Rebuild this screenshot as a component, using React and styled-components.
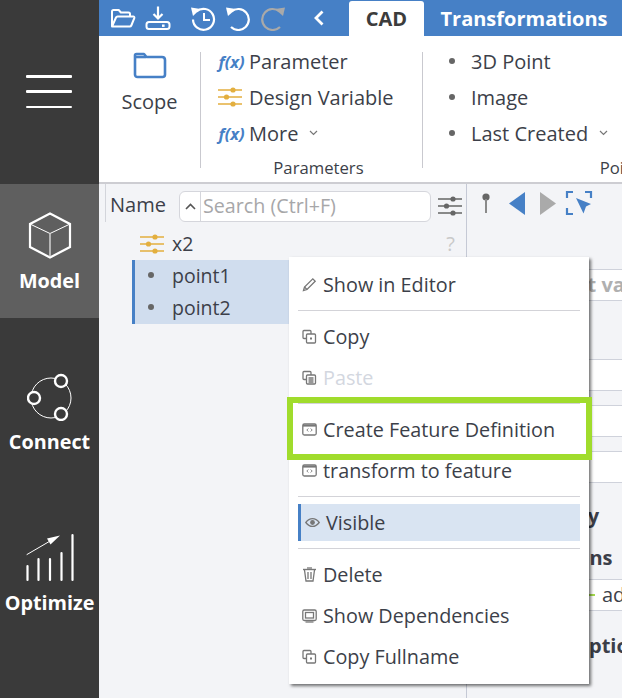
import React from 'react';
import styled, { createGlobalStyle } from 'styled-components';

const GlobalStyle = createGlobalStyle`
  html, body {
    margin: 0;
    padding: 0;
    width: 622px;
    height: 698px;
    overflow: hidden;
    background: #f3f4f7;
    font-family: "Open Sans", "Noto Sans", sans-serif;
    color: #3c3f49;
  }
  * { box-sizing: border-box; }
`;

const Shell = styled.div`
  display: grid;
  grid-template-columns: 99px 523px;
  width: 622px;
  height: 698px;
  overflow: hidden;
`;

/* left rail */
const Rail = styled.nav`
  background: #3a3a3a;
  display: flex;
  flex-direction: column;
  gap: 27px;
`;

const MenuArea = styled.div`
  height: 184px;
  margin-bottom: -27px;
  padding: 75px 0 0 26px;
  display: flex;
  flex-direction: column;
  gap: 12.8px;
`;

const MenuLine = styled.span`
  display: block;
  width: 46px;
  height: 2.5px;
  border-radius: 1px;
  background: #fff;
`;

const RailItem = styled.div`
  height: 134px;
  background: ${(p) => (p.$active ? '#5f5f5f' : 'transparent')};
  display: flex;
  flex-direction: column;
  align-items: center;
  padding-top: ${(p) => p.$top}px;
`;

const RailLabel = styled.span`
  color: #fff;
  font-size: 19.8px;
  font-weight: 700;
  line-height: 26px;
  white-space: nowrap;
  margin-top: ${(p) => p.$gap}px;
`;

/* top bar */
const Main = styled.div`
  display: flex;
  flex-direction: column;
  min-width: 0;
`;

const TopBar = styled.div`
  height: 36px;
  background: #4680c6;
  display: flex;
  align-items: center;
  padding-left: 11px;
  flex: none;
`;

const BarIcon = styled.svg`
  width: 26px;
  height: 26px;
  flex: none;
  margin-right: ${(p) => p.$gap}px;
`;

const BackChevron = styled.svg`
  width: 10px;
  height: 16px;
  flex: none;
  margin-right: 25px;
`;

const Tab = styled.div`
  height: 35px;
  margin-top: 1px;
  width: ${(p) => p.$width}px;
  flex: none;
  border-radius: 3px 3px 0 0;
  background: ${(p) => (p.$active ? '#fff' : 'transparent')};
  color: ${(p) => (p.$active ? '#3c3c3c' : '#fff')};
  font-size: 20px;
  font-weight: 700;
  line-height: 35px;
  text-align: center;
  white-space: nowrap;
`;

/* ribbon */
const Ribbon = styled.div`
  height: 148px;
  flex: none;
  background: #fff;
  border-bottom: 2px solid #cdcdd2;
  display: flex;
  padding-top: 16px;
  overflow: hidden;
`;

const RibbonGroup = styled.div`
  width: ${(p) => p.$width}px;
  flex: none;
  height: 116px;
  border-right: ${(p) => (p.$last ? 'none' : '1px solid #c9c9cf')};
  position: relative;
  display: flex;
  flex-direction: column;
`;

const ScopeButton = styled.div`
  display: flex;
  flex-direction: column;
  align-items: center;
  font-size: 20px;
  line-height: 27px;
  gap: 9px;
`;

const RibbonRows = styled.div`
  display: flex;
  flex-direction: column;
  margin-top: -9px;
  padding-left: ${(p) => p.$left}px;
`;

const RibbonRow = styled.div`
  height: 36px;
  display: flex;
  align-items: center;
  font-size: 20px;
  white-space: nowrap;
`;

const IconSlot = styled.span`
  width: ${(p) => p.$width}px;
  flex: none;
  display: flex;
  align-items: center;
`;

const Fx = styled.span`
  color: #4680c6;
  font-family: "Open Sans", sans-serif;
  font-size: 16.5px;
  font-weight: 700;
  font-style: italic;
  padding-left: 0.5px;
`;

const Caret = styled.span`
  margin-left: ${(p) => p.$gap}px;
  display: inline-flex;
`;

const GroupLabel = styled.div`
  position: absolute;
  left: 14px;
  right: 0;
  top: 104px;
  text-align: center;
  font-size: 16.7px;
  line-height: 24px;
`;

const Dot = styled.span`
  width: 6px;
  height: 6px;
  border-radius: 50%;
  background: #666;
  display: block;
`;

/* body */
const Body = styled.div`
  flex: 1;
  display: flex;
  position: relative;
  min-height: 0;
`;

const TreePanel = styled.section`
  width: 368px;
  flex: none;
  border-right: 1px solid #c5c9d5;
`;

const TreeHeader = styled.div`
  height: 38px;
  display: flex;
  align-items: center;
  padding: 0 0 0 6px;
`;

const NameCell = styled.div`
  height: 38px;
  width: 74px;
  border-left: 1px solid #d3d5db;
  padding-left: 4px;
  font-size: 20px;
  line-height: 41px;
  flex: none;
`;

const SearchBox = styled.div`
  width: 252px;
  height: 31px;
  margin-top: 6px;
  flex: none;
  display: flex;
  background: #fff;
  border: 1px solid #d5d6dc;
  border-radius: 6px;
`;

const SearchToggle = styled.div`
  width: 21px;
  flex: none;
  border-right: 1px solid #d5d6dc;
  display: flex;
  align-items: center;
  justify-content: center;
`;

const SearchText = styled.div`
  padding-left: 2px;
  font-size: 19.7px;
  line-height: 28px;
  color: #a7a7a9;
  white-space: nowrap;
`;

const FilterButton = styled.div`
  margin: 6px 0 0 7px;
  display: flex;
`;

const TreeRows = styled.div`
  padding: 6px 0 0 33px;
`;

const TreeRow = styled.div`
  height: ${(p) => p.$height || 32}px;
  display: flex;
  align-items: center;
  font-size: 19.5px;
`;

const SelectedRow = styled(TreeRow)`
  padding-bottom: 2px;
`;

const RowSlot = styled.span`
  width: ${(p) => p.$width || 40}px;
  padding-left: ${(p) => p.$pad || 0}px;
  flex: none;
  display: flex;
  align-items: center;
`;

const Hint = styled.span`
  margin-left: auto;
  margin-right: 11px;
  color: #c9c9c9;
  font-size: 20px;
`;

const Selection = styled.div`
  margin-top: 1px;
  background: #d0ddee;
  border-left: 3px solid #4680c6;
`;

/* right panel */
const DetailPanel = styled.section`
  flex: 1;
  min-width: 0;
  overflow: hidden;
`;

const DetailTools = styled.div`
  height: 85px;
  padding: 6px 0 0 12px;
`;

const Field = styled.div`
  height: ${(p) => p.$height || 32}px;
  margin-top: ${(p) => p.$top || 0}px;
  padding-left: ${(p) => p.$pad || 0}px;
  background: #fff;
  border-top: 1px solid #cfd2db;
  border-bottom: 1px solid #cfd2db;
  font-size: 20px;
  font-weight: ${(p) => (p.$muted ? 700 : 400)};
  color: ${(p) => (p.$muted ? '#b0b0b0' : 'inherit')};
  line-height: 30px;
  white-space: nowrap;
  display: flex;
  align-items: center;
`;

const Tick = styled.span`
  width: 6px;
  height: 2px;
  background: #a3d94c;
  margin-right: 7px;
  flex: none;
`;

const SectionTitle = styled.div`
  margin-top: ${(p) => p.$top}px;
  padding-left: ${(p) => p.$pad}px;
  font-size: 20px;
  font-weight: 700;
  line-height: 28px;
  white-space: nowrap;
`;

/* context menu */
const ContextMenu = styled.div`
  position: absolute;
  left: 190px;
  top: 73px;
  width: 300px;
  height: 427px;
  padding: 7px 9px;
  background: #fff;
  box-shadow: 2px 2px 3px rgba(0, 0, 0, 0.55);
  z-index: 2;
`;

const MenuItem = styled.div`
  position: relative;
  height: 41px;
  padding-left: 4px;
  display: flex;
  align-items: center;
  gap: 6px;
  font-size: 19.8px;
  color: ${(p) => (p.$disabled ? '#d3d7df' : 'inherit')};
  white-space: nowrap;
`;

const ActiveItem = styled.div`
  height: 37px;
  background: #d9e4f2;
  border-left: 3px solid #4680c6;
  padding-left: 4px;
  display: flex;
  align-items: center;
  gap: 6px;
  font-size: 19.8px;
`;

const MenuSep = styled.div`
  height: 1px;
  background: #d3d3d8;
  margin: ${(p) => p.$top || 5}px 0 ${(p) => p.$bottom || 5}px;
`;

const GreenFrame = styled.div`
  position: absolute;
  left: -11px;
  right: -12px;
  top: -12px;
  bottom: -10px;
  border: 6px solid #a0dc2c;
  pointer-events: none;
`;

/* drawings */
const Small = ({ children }) => (
  <svg width="15" height="15" viewBox="0 0 15 15" fill="none" stroke="#777" strokeWidth="1.3" style={{ flex: 'none' }}>
    {children}
  </svg>
);

const CopyIcon = () => (
  <Small>
    <rect x="1" y="1.5" width="8" height="8" rx="1" />
    <rect x="4.5" y="5" width="9" height="9" rx="1" fill="#fff" />
    <rect x="8" y="8.5" width="2" height="2" fill="#777" stroke="none" />
  </Small>
);

const PasteIcon = () => (
  <Small>
    <rect x="1" y="1.5" width="8" height="8" rx="1" />
    <rect x="4.5" y="5" width="9" height="9" rx="1" fill="#fff" />
    <path d="M6.5 8h5M6.5 10h5M6.5 12h5" />
  </Small>
);

const WindowIcon = () => (
  <Small>
    <rect x="0.8" y="2" width="13.4" height="11" rx="1.5" />
    <path d="M1 3.6h13" strokeWidth="2" />
    <path d="M6.3 6.5 4.8 8l1.5 1.5M8.7 6.5 10.2 8 8.7 9.5" strokeWidth="0.9" />
  </Small>
);

const PencilIcon = () => (
  <Small>
    <path d="M1.5 13.5 2.5 10 10.8 1.8l2.4 2.4L5 12.5Z" />
    <path d="M2.5 10 5 12.5" />
  </Small>
);

const TrashIcon = () => (
  <Small>
    <path d="M1 2.5h13" strokeWidth="1.4" />
    <path d="M5 1h5" />
    <path d="M2.5 3 4 14h7l1.5-11" />
    <path d="M6 5v7M9 5v7" />
  </Small>
);

const DependencyIcon = () => (
  <Small>
    <rect x="0.8" y="2" width="13.4" height="10.5" rx="1.5" />
    <rect x="3.5" y="4.5" width="8" height="5.5" />
    <path d="M3.5 14h8" />
  </Small>
);

const EyeIcon = () => (
  <Small>
    <path d="M0.8 7.5C3 4.5 5 3.6 7.5 3.6s4.5.9 6.7 3.9c-2.2 3-4.2 3.9-6.7 3.9S3 10.5.8 7.5Z" />
    <circle cx="7.5" cy="7.5" r="2.4" fill="#777" stroke="none" />
  </Small>
);

const SliderIcon = ({ color }) => (
  <svg width="24" height="20" viewBox="0 0 24 20" fill={color} stroke={color}>
    <path d="M0 3h24M0 10h24M0 17h24" strokeWidth="1.3" />
    <circle cx="15" cy="3" r="2.6" stroke="none" />
    <circle cx="8.5" cy="10" r="2.6" stroke="none" />
    <circle cx="15" cy="17" r="2.6" stroke="none" />
  </svg>
);

const ChevronDown = () => (
  <svg width="9" height="6" viewBox="0 0 9 6" fill="none" stroke="#777" strokeWidth="1.2">
    <path d="M1 1l3.5 3.5L8 1" />
  </svg>
);

const App = () => (
  <>
    <GlobalStyle />
    <Shell>
      <Rail>
        <MenuArea>
          <MenuLine />
          <MenuLine />
          <MenuLine />
        </MenuArea>
        <RailItem $active $top={28}>
          <svg width="44" height="47" viewBox="0 0 44 47" fill="none" stroke="#fff" strokeWidth="2.2">
            <path d="M22 1.5 42 12v23L22 45.5 2 35V12Z" />
            <path d="M3 12.5 22 21.5 41 12.5" strokeWidth="1" />
            <path d="M22 21.5v23" strokeWidth="1.6" stroke="#ccc" />
          </svg>
          <RailLabel $gap={9}>Model</RailLabel>
        </RailItem>
        <RailItem $top={28}>
          <svg width="46" height="48" viewBox="0 0 46 48" fill="none" stroke="#fff">
            <circle cx="24" cy="25" r="20" strokeWidth="1" />
            <circle cx="34" cy="8" r="6" fill="#3a3a3a" strokeWidth="2.4" />
            <circle cx="7" cy="25" r="6" fill="#3a3a3a" strokeWidth="2.4" />
            <circle cx="34" cy="41" r="6" fill="#3a3a3a" strokeWidth="2.4" />
          </svg>
          <RailLabel $gap={8}>Connect</RailLabel>
        </RailItem>
        <RailItem $top={27}>
          <svg width="50" height="50" viewBox="0 0 50 50" fill="#fff" stroke="#fff" strokeLinecap="round">
            <path d="M2 21.5 26 7.5" strokeWidth="1" />
            <path d="M35 2.5 25.5 11.5 22 5.5Z" stroke="none" />
            <path d="M2.5 33v14M13.5 26v21M25 26v21M36.5 20v27M47.5 2v45" strokeWidth="2.2" fill="none" />
          </svg>
          <RailLabel $gap={7}>Optimize</RailLabel>
        </RailItem>
      </Rail>

      <Main>
        <TopBar>
          <BarIcon $gap={9} viewBox="0 0 26 26" fill="none" stroke="#fff" strokeWidth="2" strokeLinejoin="round">
            <path d="M2 21V6.5C2 5.6 2.6 5 3.5 5h5.2l2.2 2.5h7.6c.9 0 1.5.6 1.5 1.5v2" />
            <path d="M2 21.5 6 12.5c.3-.7.9-1 1.6-1h15.6c.9 0 1.4.8 1.1 1.6l-3 7.4c-.3.7-.9 1-1.6 1H2Z" />
          </BarIcon>
          <BarIcon $gap={19} viewBox="0 0 26 26" fill="none" stroke="#fff" strokeWidth="2">
            <path d="M13 1.5v11.5M8.5 9l4.5 4.5L17.5 9" strokeWidth="2.2" />
            <rect x="1.5" y="17" width="23" height="7" rx="2.5" />
            <rect x="17" y="19.5" width="2.6" height="2.4" fill="#fff" stroke="none" />
          </BarIcon>
          <BarIcon $gap={9} viewBox="0 0 26 26" fill="none" stroke="#fff" strokeWidth="2.2">
            <path d="M6.5 6.5A10.5 10.5 0 1 1 3 14.5" />
            <path d="M1 2.5 10.5 4 3 11Z" fill="#fff" stroke="none" />
            <path d="M14 8v7h6" strokeWidth="2" />
          </BarIcon>
          <BarIcon $gap={9} viewBox="0 0 26 26" fill="none" stroke="#fff" strokeWidth="2.2">
            <path d="M6.5 6.5A10.5 10.5 0 1 1 6 22" />
            <path d="M1 2.5 11 4 3 11Z" fill="#fff" stroke="none" />
          </BarIcon>
          <BarIcon $gap={28} viewBox="0 0 26 26" fill="none" stroke="#a9a9a9" strokeWidth="2.2">
            <path d="M19.5 6.5A10.5 10.5 0 1 0 20 22" />
            <path d="M25 2.5 15 4l8 7Z" fill="#a9a9a9" stroke="none" />
          </BarIcon>
          <BackChevron viewBox="0 0 10 16" fill="none" stroke="#fff" strokeWidth="2.8">
            <path d="M8.5 1.5 2 8l6.5 6.5" />
          </BackChevron>
          <Tab $active $width={75}>CAD</Tab>
          <Tab $width={200}>Transformations</Tab>
        </TopBar>

        <Ribbon>
          <RibbonGroup $width={102}>
            <ScopeButton>
              <svg width="34" height="27" viewBox="0 0 34 27" fill="none" stroke="#4680c6" strokeWidth="2.6" strokeLinejoin="round">
                <path d="M2 5V3.5C2 2.5 2.6 2 3.5 2h7.5l2.5 3H29c1.8 0 3 1.2 3 3v14.5c0 1.5-1 2.5-2.5 2.5h-25C3 25 2 24 2 22.5Z" />
                <path d="M2 5h11" />
              </svg>
              <span>Scope</span>
            </ScopeButton>
          </RibbonGroup>

          <RibbonGroup $width={222}>
            <RibbonRows $left={17}>
              <RibbonRow>
                <IconSlot $width={31}><Fx>f(x)</Fx></IconSlot>Parameter
              </RibbonRow>
              <RibbonRow>
                <IconSlot $width={31}><SliderIcon color="#e3af3f" /></IconSlot>Design Variable
              </RibbonRow>
              <RibbonRow>
                <IconSlot $width={31}><Fx>f(x)</Fx></IconSlot>More
                <Caret $gap={11}><ChevronDown /></Caret>
              </RibbonRow>
            </RibbonRows>
            <GroupLabel>Parameters</GroupLabel>
          </RibbonGroup>

          <RibbonGroup $width={388} $last>
            <RibbonRows $left={26}>
              <RibbonRow>
                <IconSlot $width={22}><Dot /></IconSlot>3D Point
              </RibbonRow>
              <RibbonRow>
                <IconSlot $width={22}><Dot /></IconSlot>Image
              </RibbonRow>
              <RibbonRow>
                <IconSlot $width={22}><Dot /></IconSlot>Last Created
                <Caret $gap={11}><ChevronDown /></Caret>
              </RibbonRow>
            </RibbonRows>
            <GroupLabel>Points</GroupLabel>
          </RibbonGroup>
        </Ribbon>

        <Body>
          <TreePanel>
            <TreeHeader>
              <NameCell>Name</NameCell>
              <SearchBox>
                <SearchToggle>
                  <svg width="11" height="7" viewBox="0 0 11 7" fill="none" stroke="#555" strokeWidth="1.6">
                    <path d="M1 6l4.5-4.5L10 6" />
                  </svg>
                </SearchToggle>
                <SearchText>Search (Ctrl+F)</SearchText>
              </SearchBox>
              <FilterButton><SliderIcon color="#666" /></FilterButton>
            </TreeHeader>
            <TreeRows>
              <TreeRow $height={31}>
                <RowSlot $pad={8}><SliderIcon color="#e3af3f" /></RowSlot>
                x2
                <Hint>?</Hint>
              </TreeRow>
              <Selection>
                <SelectedRow>
                  <RowSlot $width={37} $pad={13}><Dot /></RowSlot>point1
                </SelectedRow>
                <SelectedRow>
                  <RowSlot $width={37} $pad={13}><Dot /></RowSlot>point2
                </SelectedRow>
              </Selection>
            </TreeRows>
          </TreePanel>

          <DetailPanel>
            <DetailTools>
              <svg width="125" height="26" viewBox="0 0 125 26">
                <circle cx="7" cy="7" r="3.6" fill="#666" />
                <path d="M7 9v14" stroke="#8a8a8a" strokeWidth="2" />
                <path d="M46 2v23L30 13.5Z" fill="#4680c6" />
                <path d="M61 2v23l16-11.5Z" fill="#aaa" />
                <path d="M88 8V2h6M106 2h6v6M88 18v6h6" fill="none" stroke="#4680c6" strokeWidth="2.2" />
                <path d="M97 8l15 6-5 2.5-2.5 7Z" fill="#4680c6" />
              </svg>
            </DetailTools>
            <Field $pad={75} $muted>Input value</Field>
            <Field $top={58} />
            <Field $top={14} />
            <Field $top={14} />
            <SectionTitle $top={19} $pad={46}>Visibility</SectionTitle>
            <SectionTitle $top={14} $pad={22}>Annotations</SectionTitle>
            <Field $top={7} $pad={122}>
              <Tick />add
            </Field>
            <SectionTitle $top={21} $pad={60}>Description</SectionTitle>
          </DetailPanel>

          <ContextMenu>
            <MenuItem><PencilIcon />Show in Editor</MenuItem>
            <MenuSep />
            <MenuItem><CopyIcon />Copy</MenuItem>
            <MenuItem $disabled><PasteIcon />Paste</MenuItem>
            <MenuSep />
            <MenuItem>
              <WindowIcon />Create Feature Definition
              <GreenFrame />
            </MenuItem>
            <MenuItem><WindowIcon />transform to feature</MenuItem>
            <MenuSep $bottom={7} />
            <ActiveItem><EyeIcon />Visible</ActiveItem>
            <MenuSep $top={7} />
            <MenuItem><TrashIcon />Delete</MenuItem>
            <MenuItem><DependencyIcon />Show Dependencies</MenuItem>
            <MenuItem><CopyIcon />Copy Fullname</MenuItem>
          </ContextMenu>
        </Body>
      </Main>
    </Shell>
  </>
);

export default App;
